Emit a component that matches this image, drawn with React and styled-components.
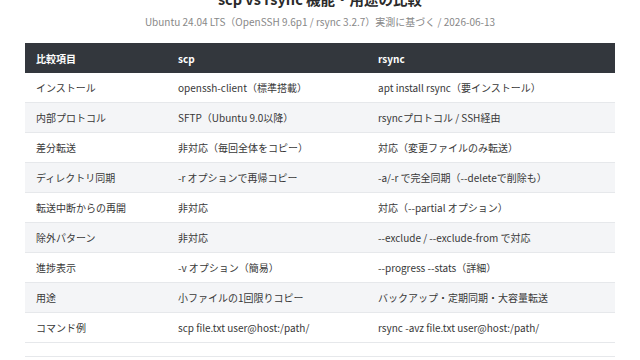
import React from "react";
import styled, { createGlobalStyle } from "styled-components";

const Global = createGlobalStyle`
  html, body { margin: 0; padding: 0; background: #ffffff; }
  body { font-family: "Noto Sans CJK JP", "Noto Sans", sans-serif; color: #333333; overflow: hidden; }
`;

const Page = styled.div`
  width: 640px;
  height: 360px;
  overflow: hidden;
  padding: 0 25px;
  box-sizing: border-box;
`;

const Title = styled.h1`
  margin: -11px 0 0;
  font-size: 14.5px;
  line-height: 20px;
  font-weight: 700;
  text-align: center;
  color: #2b2b2b;
`;

const Subtitle = styled.p`
  margin: 6px 0 0;
  font-size: 10px;
  line-height: 14px;
  text-align: center;
  color: #888888;
`;

const Table = styled.table`
  margin-top: 14px;
  width: 590px;
  border-collapse: collapse;
  table-layout: fixed;
  font-size: 10px;
`;

const HeadCell = styled.th`
  background: #33373d;
  color: #ffffff;
  font-weight: 700;
  text-align: left;
  height: 30px;
  padding: 0 11px;
  box-sizing: border-box;
  width: ${(p) => p.$w};
`;

const Row = styled.tr`
  background: ${(p) => (p.$alt ? "#f4f5f7" : "#ffffff")};
  border-bottom: 1px solid #e6e8eb;
`;

const Cell = styled.td`
  height: 29px;
  padding: 0 11px;
  color: #383838;
  white-space: nowrap;
`;

const Footer = styled.div`
  margin-top: 13px;
  border-top: 1px solid #e6e8eb;
  height: 20px;
`;

const rows = [
  ["インストール", "openssh-client（標準搭載）", "apt install rsync（要インストール）"],
  ["内部プロトコル", "SFTP（Ubuntu 9.0以降）", "rsyncプロトコル / SSH経由"],
  ["差分転送", "非対応（毎回全体をコピー）", "対応（変更ファイルのみ転送）"],
  ["ディレクトリ同期", "-r オプションで再帰コピー", "-a/-r で完全同期（--deleteで削除も）"],
  ["転送中断からの再開", "非対応", "対応（--partial オプション）"],
  ["除外パターン", "非対応", "--exclude / --exclude-from で対応"],
  ["進捗表示", "-v オプション（簡易）", "--progress --stats（詳細）"],
  ["用途", "小ファイルの1回限りコピー", "バックアップ・定期同期・大容量転送"],
  ["コマンド例", "scp file.txt user@host:/path/", "rsync -avz file.txt user@host:/path/"],
];

export default function App() {
  return (
    <>
      <Global />
      <Page>
        <Title>scp vs rsync 機能・用途の比較</Title>
        <Subtitle>Ubuntu 24.04 LTS（OpenSSH 9.6p1 / rsync 3.2.7）実測に基づく / 2026-06-13</Subtitle>
        <Table>
          <thead>
            <tr>
              <HeadCell $w="142px">比較項目</HeadCell>
              <HeadCell $w="200px">scp</HeadCell>
              <HeadCell $w="248px">rsync</HeadCell>
            </tr>
          </thead>
          <tbody>
            {rows.map((r, i) => (
              <Row key={i} $alt={i % 2 === 1}>
                {r.map((c, j) => (
                  <Cell key={j}>{c}</Cell>
                ))}
              </Row>
            ))}
          </tbody>
        </Table>
        <Footer />
      </Page>
    </>
  );
}
